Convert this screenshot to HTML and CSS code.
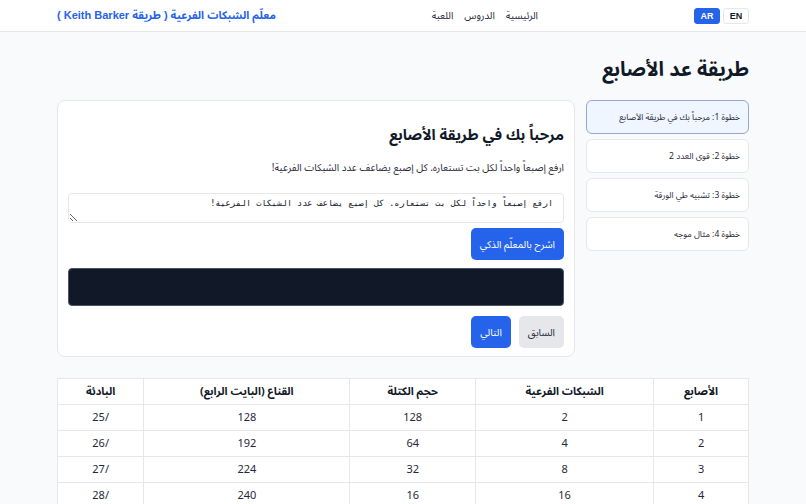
FILE: index.html
```html
<!DOCTYPE html>
<html lang="ar" dir="rtl">
<head>
    <meta charset="UTF-8">
    <meta name="viewport" content="width=device-width, initial-scale=1.0">
    <title>طريقة عد الأصابع</title>
    <link rel="stylesheet" href="styles.css">
</head>
<body>

    <header>
        <div class="header-inner">
            <div class="logo">معلّم الشبكات الفرعية ( طريقة Keith Barker )</div>
            <nav>
                <a href="#" class="nav-link">الرئيسية</a>
                <a href="#" class="nav-link">الدروس</a>
                <a href="#" class="nav-link">اللعبة</a>
            </nav>
            <div class="lang">
                <button class="lang-btn active">AR</button>
                <button class="lang-btn">EN</button>
            </div>
        </div>
    </header>

    <main class="container">
        <h1 class="page-title">طريقة عد الأصابع</h1>

        <div class="lesson">
            <aside class="steps">
                <div class="step active">خطوة 1: مرحباً بك في طريقة الأصابع</div>
                <div class="step">خطوة 2: قوى العدد 2</div>
                <div class="step">خطوة 3: تشبيه طي الورقة</div>
                <div class="step">خطوة 4: مثال موجه</div>
            </aside>

            <section class="card">
                <h2>مرحباً بك في طريقة الأصابع</h2>
                <p>ارفع إصبعاً واحداً لكل بت تستعاره. كل إصبع يضاعف عدد الشبكات الفرعية!</p>
                <textarea class="prompt">ارفع إصبعاً واحداً لكل بت تستعاره. كل إصبع يضاعف عدد الشبكات الفرعية!</textarea>
                <button class="btn btn-primary ai-btn">اشرح بالمعلّم الذكي</button>
                <div class="output"></div>
                <div class="step-nav">
                    <button class="btn btn-gray">السابق</button>
                    <button class="btn btn-primary">التالي</button>
                </div>
            </section>
        </div>

        <table class="subnets">
            <thead>
                <tr>
                    <th>الأصابع</th>
                    <th>الشبكات الفرعية</th>
                    <th>حجم الكتلة</th>
                    <th>القناع (البايت الرابع)</th>
                    <th>البادئة</th>
                </tr>
            </thead>
            <tbody>
                <tr><td>1</td><td>2</td><td>128</td><td>128</td><td>/25</td></tr>
                <tr><td>2</td><td>4</td><td>64</td><td>192</td><td>/26</td></tr>
                <tr><td>3</td><td>8</td><td>32</td><td>224</td><td>/27</td></tr>
                <tr><td>4</td><td>16</td><td>16</td><td>240</td><td>/28</td></tr>
            </tbody>
        </table>
    </main>

</body>
</html>
```

FILE: styles.css
```css
/* General Styling */
body {
    font-family: "Noto Sans Arabic", "Noto Sans", sans-serif;
    margin: 0;
    padding: 0;
    background-color: #f8fafc;
    color: #111827;
}

header {
    background-color: #ffffff;
    border-bottom: 1px solid #e5e7eb;
}

.header-inner {
    direction: ltr;
    max-width: 692px;
    margin: 0 auto;
    height: 31px;
    display: flex;
    justify-content: space-between;
    align-items: center;
}

header .logo {
    direction: rtl;
    font-family: "Liberation Sans", "Noto Sans Arabic", sans-serif;
    font-size: 11px;
    font-weight: bold;
    color: #2563eb;
}

header nav {
    direction: rtl;
    display: flex;
    gap: 11px;
}

header nav a {
    color: #1f2937;
    font-size: 10px;
    text-decoration: none;
}

.lang {
    display: flex;
    gap: 3px;
}

.lang-btn {
    font-family: "Liberation Sans", sans-serif;
    font-size: 9px;
    font-weight: bold;
    padding: 0;
    width: 26px;
    height: 16px;
    border: 1px solid #e5e7eb;
    border-radius: 3px;
    background: #fff;
    color: #111827;
}

.lang-btn.active {
    background: #2563eb;
    border-color: #2563eb;
    color: #fff;
}

/* Page */
.container {
    max-width: 692px;
    margin: 0 auto;
}

.page-title {
    font-size: 20px;
    font-weight: bold;
    margin: 23px 0 14px;
    line-height: 31px;
}

.lesson {
    display: flex;
    gap: 11px;
    align-items: flex-start;
}

/* Steps list */
.steps {
    width: 163px;
    flex-shrink: 0;
    display: flex;
    flex-direction: column;
    gap: 5px;
}

.step {
    height: 32px;
    display: flex;
    align-items: center;
    padding: 0 8px;
    font-size: 8.5px;
    background: #fff;
    border: 1px solid #e5e7eb;
    border-radius: 6px;
    color: #1f2937;
}

.step.active {
    background: #eff6ff;
    border-color: #93a8d8;
}

/* Lesson card */
.card {
    flex: 1;
    background: #fff;
    border: 1px solid #e5e7eb;
    border-radius: 8px;
    padding: 10px 10px 8px;
    display: flex;
    flex-direction: column;
}

.card h2 {
    font-size: 15px;
    margin: 12px 0 0;
    line-height: 24px;
}

.card p {
    font-size: 10px;
    margin: 12px 0 0;
    line-height: 18px;
    color: #1f2937;
}

.prompt {
    margin-top: 16px;
    height: 30px;
    box-sizing: border-box;
    padding: 4px 10px;
    font-family: "DejaVu Sans Mono", monospace;
    font-size: 8.5px;
    border: 1px solid #e5e7eb;
    border-radius: 4px;
    color: #111827;
    resize: vertical;
}

.btn {
    font-family: inherit;
    font-size: 10px;
    border: none;
    border-radius: 5px;
    height: 32px;
    padding: 0 9px;
    cursor: pointer;
}

.btn-primary {
    background: #2563eb;
    color: #fff;
}

.btn-gray {
    background: #e5e7eb;
    color: #1f2937;
}

.ai-btn {
    align-self: flex-start;
    margin-top: 5px;
}

.output {
    margin-top: 8px;
    height: 36px;
    background: #111827;
    border: 1px solid #4b5563;
    border-radius: 4px;
}

.step-nav {
    margin-top: 10px;
    display: flex;
    gap: 8px;
}

/* Subnet table */
.subnets {
    width: 100%;
    margin-top: 21px;
    border-collapse: collapse;
    background: #fff;
    font-size: 11px;
}

.subnets th,
.subnets td {
    border: 1px solid #e5e7eb;
    height: 25px;
    padding: 0 8px;
    text-align: center;
    color: #1f2937;
}

.subnets th {
    font-weight: bold;
    color: #111827;
}
```
